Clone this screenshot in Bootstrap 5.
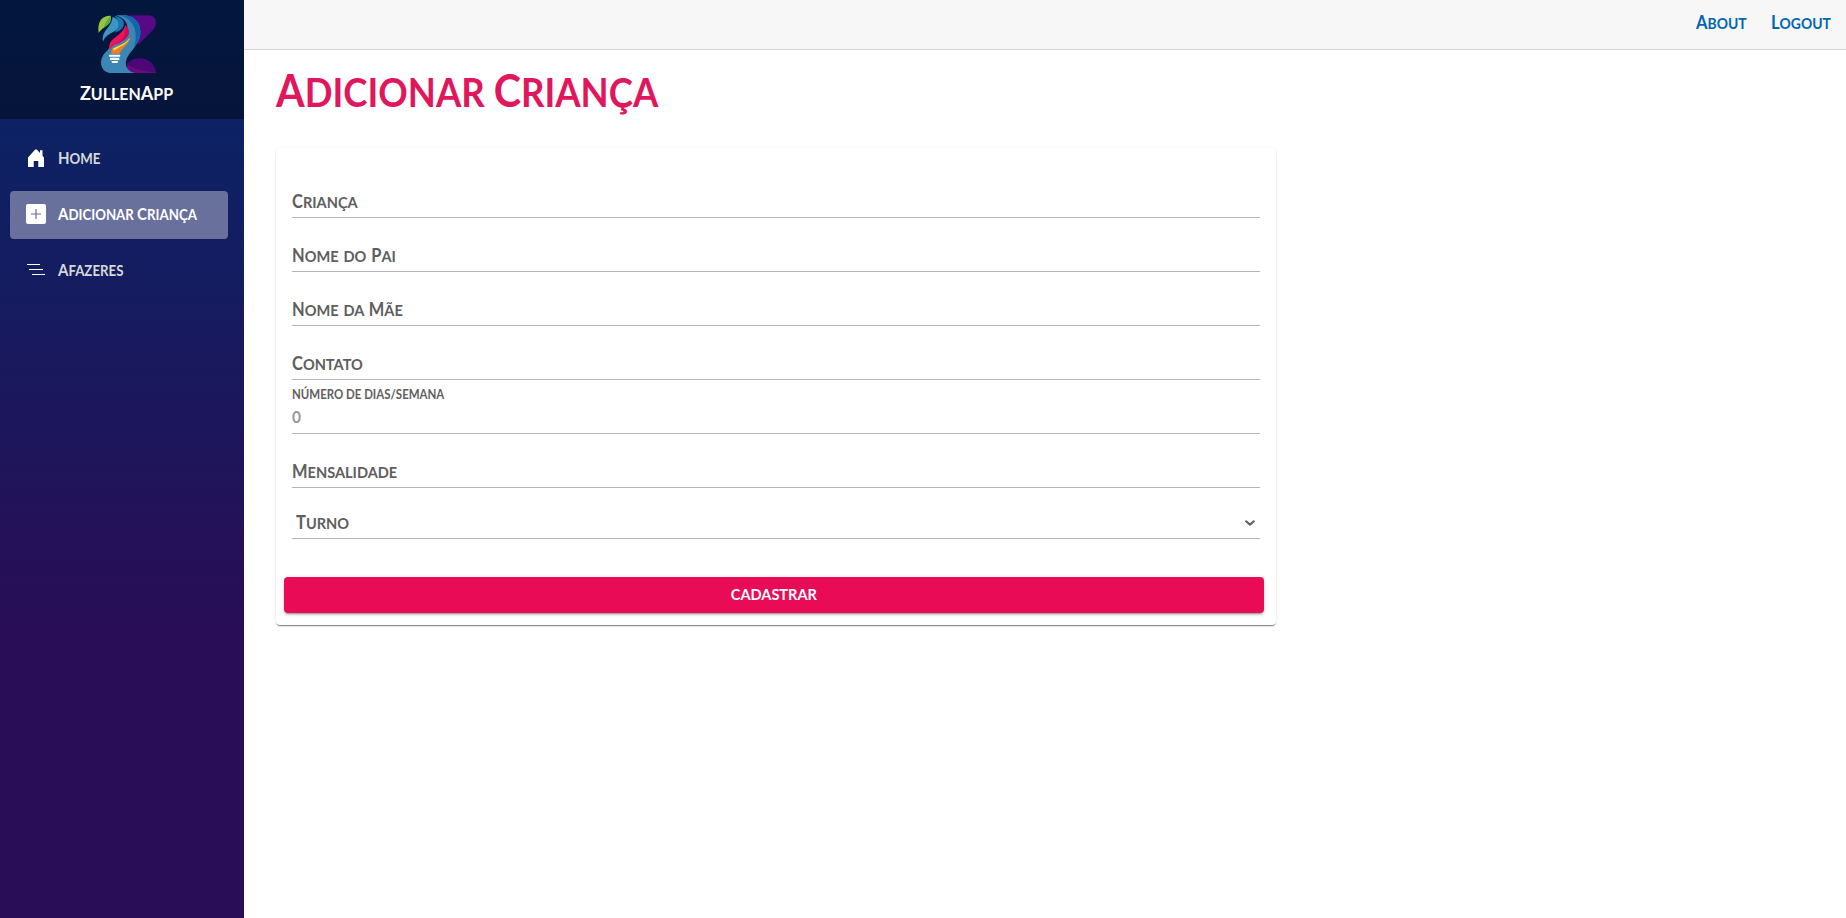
<!DOCTYPE html>
<html lang="pt-BR">
<head>
<meta charset="utf-8">
<meta name="viewport" content="width=device-width, initial-scale=1">
<title>ZullenApp</title>
<link rel="stylesheet" href="https://cdn.jsdelivr.net/npm/bootstrap@5.3.0/dist/css/bootstrap.min.css">
<style>
body{font-family:Lato,"Liberation Sans",sans-serif;font-weight:700;color:#5e5e5e;background:#fff}
/* capitalised words: tall initial, slightly shorter capitals after it */
.wd{display:inline-block;text-transform:uppercase;line-height:1}
.wd::first-letter{font-size:1.13em}
/* narrowed lettering */
.slim{display:inline-block;white-space:nowrap;transform:scaleX(.91);transform-origin:left center}
.side{width:244px;background:linear-gradient(180deg,#052767 0,#290d56 70%)}
.brandbox{height:119px;background:rgba(0,0,0,.4);padding:5px 0 0 6px}
.brandname{font-size:17px;line-height:28px;color:#fff;padding-left:3px;transform:scaleX(.94)}
.menu{padding:16px 16px 0 10px;gap:8px}
.menu .nav-link{height:48px;padding:0 0 0 16px;gap:12px;font-size:15px;line-height:20px;color:#d7d7d7;border-radius:4px}
.menu .nav-link.active{background:rgba(255,255,255,.37);color:#fff}
.menu .slim{transform:scaleX(.885);margin-top:-2px}
.menu svg{flex:none;margin-top:-2px}
.topbar{height:50px;background:#f7f7f7;border-bottom:1px solid #d6d5d5;padding:0 16px 4px 0;gap:25px;font-size:16px}
.topbar a{color:#0366b0;text-decoration:none}
.topbar .slim{width:50px;transform:scaleX(.87)}
.topbar .slim+.slim{width:59px}
.topbar .wd::first-letter{font-size:1.19em}
.page{padding:16px 32px}
h1{height:50px;font-size:40px;line-height:52px;font-weight:700;color:#e0175c;margin:0 0 32px}
h1 .slim{transform:scaleX(.913)}
.panel{width:1000px;height:477px;border-radius:4px;padding:16px 12px 12px 8px;box-shadow:0 2px 1px -1px rgba(0,0,0,.35),0 1px 1px rgba(0,0,0,.14),0 1px 3px rgba(0,0,0,.12)}
.field{height:54px;margin:0 4px 0 8px;border-bottom:1px solid #b5b5b5;font-size:16px;line-height:20px;padding-bottom:5px;word-spacing:1.5px}
.field.pick{height:51px;padding-left:4px;padding-right:4px}
.send{height:36px;border:0;border-radius:4px;background:#ea0b57;color:#fff;font-size:15.5px;line-height:20px;font-weight:700;padding:0 0 2px;margin-top:38px;box-shadow:0 3px 1px -2px rgba(0,0,0,.2),0 2px 2px rgba(0,0,0,.14),0 1px 5px rgba(0,0,0,.12)}
.send .slim{transform:scaleX(.94);transform-origin:center}
.tiny{font-size:12.6px;line-height:14px;word-spacing:0;margin-bottom:5px}
.zero{color:#999;font-size:17px;line-height:20px;margin-bottom:1px}
</style>
</head>
<body>
<div class="d-flex min-vh-100">
  <aside class="side flex-shrink-0">
    <div class="brandbox d-flex flex-column align-items-center">
      <svg width="80" height="75" viewBox="0 2 240 225" aria-hidden="true">
        <path d="M130 33H196C216 38 218 64 203 78L160 121C155 90 156 55 130 33Z" fill="#560a86"/>
        <path d="M125 180C138 159 174 155 196 172C207 181 213 192 213 206H148Q124 202 125 180Z" fill="#4c0878"/>
        <path d="M129 181C145 192 172 200 213 204V206H148Q126 201 125 186Z" fill="#690b78"/>
        <path d="M92 33H123C153 38 169 61 166 91C163 122 127 147 123 169C119 190 133 203 151 206H73C49 202 42 176 53 156C60 141 76 137 76 116C85 96 120 94 127 75C130 57 116 39 92 33Z" fill="#3c86b5"/>
        <path d="M106 33H123C153 38 169 61 166 91C164 104 156 116 147 127C160 88 150 47 106 33Z" fill="#1167a8"/>
        <path d="M41 86C36 52 51 33 77 34C82 62 56 64 41 86Z" fill="#91c63e"/>
        <path d="M56 70C61 52 70 43 77 34C82 57 68 61 56 70Z" fill="#5da944"/>
        <path d="M54 112C49 75 79 73 83 37C107 47 107 65 94 77C80 88 62 90 54 112Z" fill="#4095bf"/>
        <path d="M88 34C110 36 123 54 114 69C108 80 95 82 88 86C105 67 103 49 88 34Z" fill="#1476b6"/>
        <path d="M74 138C65 99 110 101 121 62C149 89 119 109 99 117C86 123 78 128 74 138Z" fill="#f01259"/>
        <path d="M95 119C114 106 126 87 121 62C148 90 117 112 95 119Z" fill="#b81457"/>
        <path d="M83 133C101 124 120 121 136 99C131 123 112 129 103 148H79Q78 138 83 133Z" fill="#ef7e23"/>
        <path d="M83 133C101 124 120 121 136 99C129 120 101 128 88 139Z" fill="#ffd53c"/>
        <path d="M74 151H104Q106 151 106 154T104 157H74Q72 157 72 154T74 151ZM75 160H103V167H75ZM79 170H99L97 176H82Z" fill="#fff"/>
      </svg>
      <div class="brandname"><span class="wd">Zullen</span><span class="wd">App</span></div>
    </div>
    <nav class="menu nav flex-column">
      <a class="nav-link d-flex align-items-center"><svg width="20" height="20" viewBox="0 0 20 20" fill="#fff" aria-hidden="true"><path d="M2 9.5 9 1.7Q10 .6 11 1.7L14 5V2.2H16.5V7.7L18 9.5V19H12.3V13H7.7V19H2Z"/></svg><span class="slim"><span class="wd">Home</span></span></a>
      <a class="nav-link active d-flex align-items-center"><svg width="20" height="20" viewBox="0 0 20 20" aria-hidden="true"><rect width="20" height="20" rx="2" fill="#fff"/><path d="M10 5V15M5 10H15" stroke="#6a719c" stroke-width="1.2"/></svg><span class="slim"><span class="wd">Adicionar</span> <span class="wd">Criança</span></span></a>
      <a class="nav-link d-flex align-items-center"><svg width="20" height="20" viewBox="0 0 20 20" stroke="#fff" stroke-width="1.2" aria-hidden="true"><path d="M1 4.5H14M3 9.5H17M6 14.5H19"/></svg><span class="slim"><span class="wd">Afazeres</span></span></a>
    </nav>
  </aside>
  <main class="flex-grow-1">
    <div class="topbar d-flex align-items-center justify-content-end">
      <a class="slim"><span class="wd">About</span></a>
      <a class="slim"><span class="wd">Logout</span></a>
    </div>
    <div class="page">
      <h1><span class="slim"><span class="wd">Adicionar</span> <span class="wd">Criança</span></span></h1>
      <form class="panel">
        <div class="field d-flex align-items-end"><span class="slim"><span class="wd">Criança</span></span></div>
        <div class="field d-flex align-items-end"><span class="slim"><span class="wd">Nome</span> <span class="text-uppercase">do</span> <span class="wd">Pai</span></span></div>
        <div class="field d-flex align-items-end"><span class="slim"><span class="wd">Nome</span> <span class="text-uppercase">da</span> <span class="wd">Mãe</span></span></div>
        <div class="field d-flex align-items-end"><span class="slim"><span class="wd">Contato</span></span></div>
        <div class="field d-flex flex-column align-items-start justify-content-end"><span class="slim tiny text-uppercase">número de dias/semana</span><span class="slim zero">0</span></div>
        <div class="field d-flex align-items-end"><span class="slim"><span class="wd">Mensalidade</span></span></div>
        <div class="field pick d-flex align-items-end justify-content-between"><span class="slim"><span class="wd">Turno</span></span><svg class="mb-1" width="12" height="12" viewBox="0 0 12 12" fill="none" stroke="#606060" stroke-width="2" aria-hidden="true"><path d="M1.5 3.7 6 7.6 10.5 3.7"/></svg></div>
        <button type="button" class="send btn w-100"><span class="slim text-uppercase">cadastrar</span></button>
      </form>
    </div>
  </main>
</div>
<script src="https://cdn.jsdelivr.net/npm/bootstrap@5.3.0/dist/js/bootstrap.bundle.min.js"></script>
</body>
</html>
